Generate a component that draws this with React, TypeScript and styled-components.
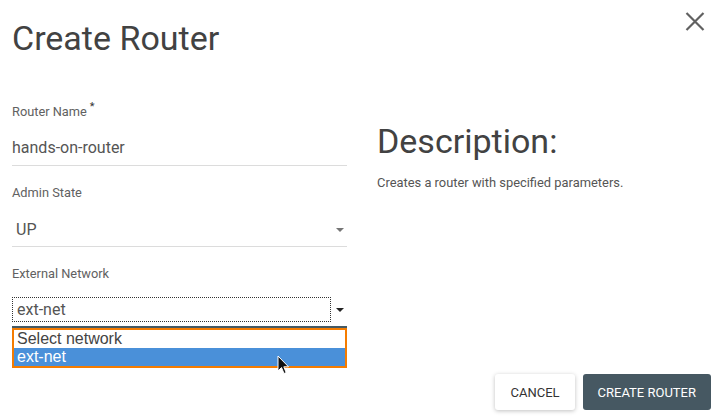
import React from 'react';
import styled, { createGlobalStyle } from 'styled-components';

const GlobalStyle = createGlobalStyle`
    html, body {
        margin: 0;
        padding: 0;
        background: #ffffff;
    }
    body {
        font-family: Roboto, 'Liberation Sans', sans-serif;
    }
`;

const Modal = styled.div`
    position: relative;
    width: 721px;
    height: 420px;
    box-sizing: border-box;
    padding: 12px 10px 10px 12px;
    display: flex;
    flex-direction: column;
    overflow: hidden;
    color: #444;
`;

const Header = styled.div`
    display: flex;
    justify-content: space-between;
    align-items: flex-start;
`;

const Title = styled.h1`
    margin: 6px 0 0;
    font-size: 34px;
    line-height: 40px;
    font-weight: 400;
    color: #424242;
`;

const CloseButton = styled.button`
    width: 22px;
    height: 20px;
    margin: -1px 5px 0 0;
    padding: 0;
    border: none;
    background: none;
    cursor: pointer;
    display: flex;
    align-items: center;
    justify-content: center;
`;

const Body = styled.div`
    display: flex;
    gap: 30px;
    padding-top: 47px;
`;

const Form = styled.div`
    width: 335px;
    display: flex;
    flex-direction: column;
    gap: 20px;
`;

const Field = styled.div`
    display: flex;
    flex-direction: column;
`;

const Label = styled.label`
    font-size: 12.8px;
    line-height: 14px;
    color: #616161;
`;

const Required = styled.sup`
    font-size: 11px;
    line-height: 0;
    margin-left: 3px;
    color: #333;
    vertical-align: 6px;
`;

const TextValue = styled.div`
    padding: 19px 0 7px;
    font-size: 16px;
    line-height: 20px;
    color: #555;
    border-bottom: 1px solid #dcdcdc;
`;

const SelectRow = styled.div<{ $focused?: boolean }>`
    position: relative;
    display: flex;
    align-items: center;
    justify-content: space-between;
    font-size: 16px;
    line-height: 20px;
    color: #555;
    padding: ${(p) => (p.$focused ? '16px 0 4px' : '20px 0 6px 4px')};
    border-bottom: ${(p) => (p.$focused ? '2px solid #455a64' : '1px solid #dcdcdc')};
`;

const SelectBox = styled.div`
    width: 319px;
    box-sizing: border-box;
    height: 25px;
    line-height: 23px;
    padding-left: 4px;
    border: 1px dotted #333;
    color: #555;
`;

const Caret = styled.span<{ $dark?: boolean }>`
    width: 0;
    height: 0;
    margin-right: 3px;
    border-left: 4px solid transparent;
    border-right: 4px solid transparent;
    border-top: 4px solid ${(p) => (p.$dark ? '#222' : '#757575')};
`;

const Dropdown = styled.ul`
    position: absolute;
    left: 0;
    right: 0;
    top: calc(100% + 2px);
    margin: 0;
    padding: 0;
    list-style: none;
    border: 2px solid #f57c00;
    background: #fff;
    font-family: 'Liberation Sans', Arial, sans-serif;
    font-size: 16px;
    z-index: 2;
`;

const Option = styled.li<{ $active?: boolean }>`
    height: 18px;
    line-height: 18px;
    padding-left: 3px;
    background: ${(p) => (p.$active ? '#4a90d9' : '#fff')};
    color: ${(p) => (p.$active ? '#fff' : '#444')};
`;

const Pointer = styled.svg`
    position: absolute;
    left: 277px;
    top: 355px;
    z-index: 3;
`;

const Description = styled.div`
    flex: 1;
`;

const DescTitle = styled.h2`
    margin: 16px 0 0;
    font-size: 34px;
    line-height: 40px;
    font-weight: 400;
    color: #424242;
`;

const DescText = styled.p`
    margin: 15px 0 0;
    font-size: 12.9px;
    line-height: 14px;
    color: #555;
`;

const Footer = styled.div`
    margin-top: auto;
    display: flex;
    justify-content: flex-end;
    gap: 8px;
`;

const Button = styled.button<{ $primary?: boolean }>`
    height: 36px;
    padding: 0 15px;
    border: none;
    border-radius: 3px;
    font-family: Roboto, sans-serif;
    font-size: 13px;
    text-transform: uppercase;
    cursor: pointer;
    background: ${(p) => (p.$primary ? '#465862' : '#fff')};
    color: ${(p) => (p.$primary ? '#fff' : '#333')};
    box-shadow: ${(p) => (p.$primary ? 'none' : '0 1px 4px rgba(0, 0, 0, 0.25)')};
`;

const App = () => {
    return (
        <>
            <GlobalStyle />
            <Modal>
                <Header>
                    <Title>Create Router</Title>
                    <CloseButton aria-label="close">
                        <svg width="20" height="19" viewBox="0 0 20 19">
                            <path d="M1.5 1 L18.5 18 M18.5 1 L1.5 18" stroke="#616161" strokeWidth="2.2" />
                        </svg>
                    </CloseButton>
                </Header>
                <Body>
                    <Form>
                        <Field>
                            <Label>
                                Router Name<Required>*</Required>
                            </Label>
                            <TextValue>hands-on-router</TextValue>
                        </Field>
                        <Field>
                            <Label>Admin State</Label>
                            <SelectRow>
                                <span>UP</span>
                                <Caret />
                            </SelectRow>
                        </Field>
                        <Field>
                            <Label>External Network</Label>
                            <SelectRow $focused>
                                <SelectBox>ext-net</SelectBox>
                                <Caret $dark />
                                <Dropdown>
                                    <Option>Select network</Option>
                                    <Option $active>ext-net</Option>
                                </Dropdown>
                            </SelectRow>
                        </Field>
                    </Form>
                    <Description>
                        <DescTitle>Description:</DescTitle>
                        <DescText>Creates a router with specified parameters.</DescText>
                    </Description>
                </Body>
                <Footer>
                    <Button>Cancel</Button>
                    <Button $primary>Create Router</Button>
                </Footer>
                <Pointer width="13" height="20" viewBox="0 0 13 20">
                    <path d="M1 1 L1 16 L4.5 12.5 L7 18.5 L9.2 17.6 L6.8 11.8 L11.5 11.8 Z" fill="#111" stroke="#fff" strokeWidth="1" />
                </Pointer>
            </Modal>
        </>
    );
};

export default App;
